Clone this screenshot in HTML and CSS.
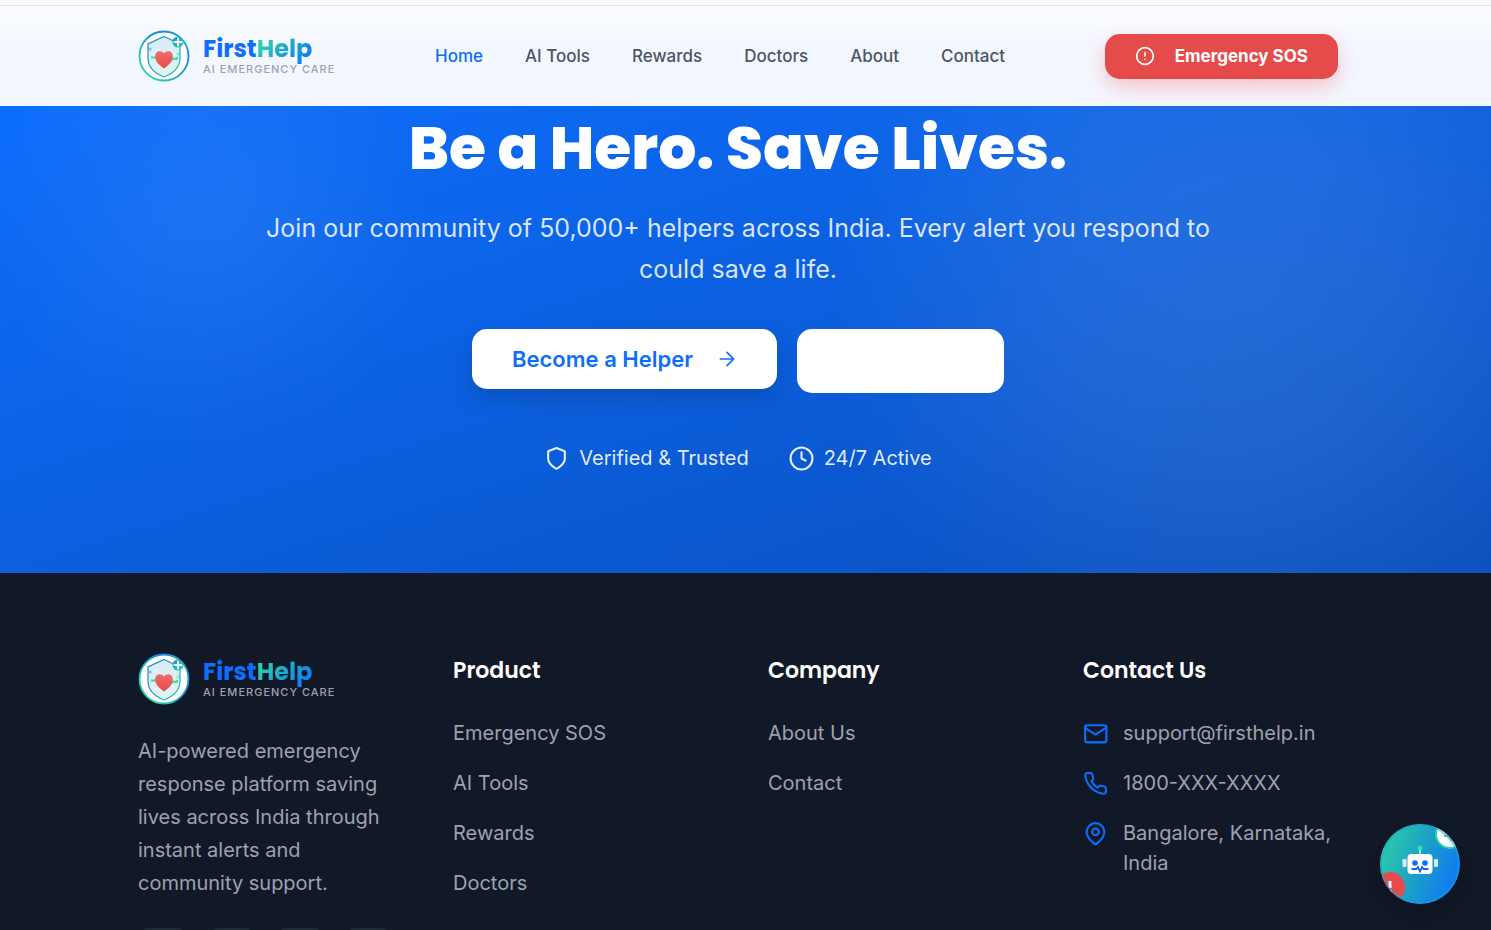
FILE: index.html
```html
<!DOCTYPE html>
<html lang="en">
<head>
    <meta charset="UTF-8">
    <meta name="viewport" content="width=device-width, initial-scale=1.0">
    <title>FirstHelp - AI Emergency Care</title>
    <link rel="stylesheet" href="styles.css">
</head>
<body>

    <!-- shared logo mark -->
    <svg class="defs" width="0" height="0" aria-hidden="true">
        <defs>
            <linearGradient id="ring" x1="0" y1="1" x2="1" y2="0">
                <stop offset="0" stop-color="#2ee59d"/>
                <stop offset="0.5" stop-color="#1a9fc9"/>
                <stop offset="0.75" stop-color="#1a86dd"/>
                <stop offset="1" stop-color="#2ecfa5"/>
            </linearGradient>
            <linearGradient id="badge" x1="0" y1="0" x2="1" y2="1">
                <stop offset="0" stop-color="#1a90d4"/>
                <stop offset="1" stop-color="#2ed6a0"/>
            </linearGradient>
            <linearGradient id="shieldFill" x1="0" y1="0" x2="0" y2="1">
                <stop offset="0" stop-color="#dbeaf8"/>
                <stop offset="1" stop-color="#dff6f0"/>
            </linearGradient>
            <linearGradient id="shieldLine" x1="0" y1="0" x2="1" y2="1">
                <stop offset="0" stop-color="#1a7fe0"/>
                <stop offset="1" stop-color="#24c3ae"/>
            </linearGradient>
            <linearGradient id="heart" x1="0" y1="0" x2="0" y2="1">
                <stop offset="0" stop-color="#f46a6a"/>
                <stop offset="1" stop-color="#e64b4b"/>
            </linearGradient>
            <symbol id="mark" viewBox="0 0 52 52">
                <circle cx="26" cy="26" r="24.5" fill="#fff" stroke="url(#ring)" stroke-width="1.8"/>
                <path d="M26 6.500L42 14V28C42 37.500 35 43.500 26 47C17 43.500 10 37.500 10 28V14Z" fill="url(#shieldFill)" stroke="url(#shieldLine)" stroke-width="1.2"/>
                <path d="M13 27.500H18M33 30L36 28.500L38.500 29L39.500 27" fill="none" stroke="#2ee59d" stroke-width="2"/>
                <path d="M26 38.500C20 34 17.200 31 17.200 26.500C17.200 20.500 23.500 20 26 23.500C28.500 20 34.800 20.500 34.800 26.500C34.800 31 32 34 26 38.500Z" fill="url(#heart)"/>
                <circle cx="12" cy="19" r="1.600" fill="#5b9bf5" opacity="0.7"/>
                <circle cx="40" cy="24" r="1.400" fill="#2ee59d" opacity="0.5"/>
                <circle cx="40" cy="12" r="5.500" fill="url(#badge)"/>
                <path d="M40 8.500V15.500M36.500 12H43.500" stroke="#fff" stroke-width="1.800" stroke-linecap="round"/>
            </symbol>
        </defs>
    </svg>

    <header class="navbar">
        <div class="container nav-inner">
            <a class="logo" href="#">
                <svg class="logo-mark" aria-hidden="true"><use href="#mark"/></svg>
                <span class="logo-text">
                    <span class="logo-name">First<span class="logo-accent">Help</span></span>
                    <span class="logo-tag">AI EMERGENCY CARE</span>
                </span>
            </a>
            <nav class="nav-links">
                <a class="active" href="#">Home</a>
                <a href="#">AI Tools</a>
                <a href="#">Rewards</a>
                <a href="#">Doctors</a>
                <a href="#">About</a>
                <a href="#">Contact</a>
            </nav>
            <button class="btn-sos" type="button">
                <svg class="icon-sm" viewBox="0 0 24 24" aria-hidden="true"><circle cx="12" cy="12" r="10"/><path d="M12 8v4M12 16h.01"/></svg>
                Emergency SOS
            </button>
        </div>
    </header>

    <section class="cta">
        <div class="container cta-inner">
            <h2>Be a Hero. Save Lives.</h2>
            <p class="cta-text">Join our community of 50,000+ helpers across India. Every alert you respond to could save a life.</p>
            <div class="cta-buttons">
                <button class="btn-helper" type="button">
                    Become a Helper
                    <svg class="icon-sm" viewBox="0 0 24 24" aria-hidden="true"><path d="M4 12h16M12 4l8 8-8 8"/></svg>
                </button>
                <button class="btn-blank" type="button" aria-label="Learn more"></button>
            </div>
            <div class="cta-trust">
                <span><svg class="icon" viewBox="0 0 24 24" aria-hidden="true"><path d="M12 22s8-4 8-10V5l-8-3-8 3v7c0 6 8 10 8 10z"/></svg>Verified &amp; Trusted</span>
                <span><svg class="icon" viewBox="0 0 24 24" aria-hidden="true"><circle cx="12" cy="12" r="10.500"/><path d="M12 6v6l4 2"/></svg>24/7 Active</span>
            </div>
        </div>
    </section>

    <footer class="footer">
        <div class="container footer-grid">
            <div class="footer-brand">
                <a class="logo" href="#">
                    <svg class="logo-mark" aria-hidden="true"><use href="#mark"/></svg>
                    <span class="logo-text">
                        <span class="logo-name">First<span class="logo-accent">Help</span></span>
                        <span class="logo-tag">AI EMERGENCY CARE</span>
                    </span>
                </a>
                <p>AI-powered emergency response platform saving lives across India through instant alerts and community support.</p>
                <div class="social">
                    <a href="#" aria-label="Facebook"></a>
                    <a href="#" aria-label="Twitter"></a>
                    <a href="#" aria-label="Instagram"></a>
                    <a href="#" aria-label="LinkedIn"></a>
                </div>
            </div>
            <div>
                <h3>Product</h3>
                <ul>
                    <li><a href="#">Emergency SOS</a></li>
                    <li><a href="#">AI Tools</a></li>
                    <li><a href="#">Rewards</a></li>
                    <li><a href="#">Doctors</a></li>
                </ul>
            </div>
            <div>
                <h3>Company</h3>
                <ul>
                    <li><a href="#">About Us</a></li>
                    <li><a href="#">Contact</a></li>
                </ul>
            </div>
            <div>
                <h3>Contact Us</h3>
                <ul class="contact">
                    <li><svg class="icon" viewBox="0 0 24 24" aria-hidden="true"><rect x="2" y="4" width="20.500" height="16.500" rx="2"/><path d="M2 6.500l10 6.500 10-6.500"/></svg>support@firsthelp.in</li>
                    <li><svg class="icon" viewBox="0 0 24 24" aria-hidden="true"><path d="M22 16.920v3a2 2 0 0 1-2.180 2 19.790 19.790 0 0 1-8.630-3.070 19.500 19.500 0 0 1-6-6 19.790 19.790 0 0 1-3.070-8.670A2 2 0 0 1 4.110 2h3a2 2 0 0 1 2 1.720 12.840 12.840 0 0 0 .7 2.810 2 2 0 0 1-.45 2.110L8.090 9.910a16 16 0 0 0 6 6l1.270-1.270a2 2 0 0 1 2.110-.45 12.840 12.840 0 0 0 2.810.7A2 2 0 0 1 22 16.920z"/></svg>1800-XXX-XXXX</li>
                    <li><svg class="icon" viewBox="0 0 24 24" aria-hidden="true"><path d="M20.500 10.500c0 6.500-8.500 12-8.500 12s-8.500-5.500-8.500-12a8.500 8.500 0 0 1 17 0z"/><circle cx="12" cy="10.500" r="3.200"/></svg>Bangalore, Karnataka, India</li>
                </ul>
            </div>
        </div>
    </footer>

    <button class="chat-btn" type="button" aria-label="Open assistant">
        <svg viewBox="0 0 80 80" aria-hidden="true">
            <path d="M40 24v7" stroke="#d5eef8" stroke-width="1.500"/>
            <circle cx="40" cy="24" r="2.500" fill="#2ee59d"/>
            <rect x="22.500" y="35" width="4" height="8" rx="1" fill="#d5eef8"/>
            <rect x="54" y="35" width="4" height="8" rx="1" fill="#d5eef8"/>
            <rect x="27.500" y="30" width="25" height="20" rx="4" fill="#fff"/>
            <circle cx="35" cy="39" r="2.800" fill="#0d6efd"/>
            <circle cx="45" cy="39" r="2.800" fill="#0d6efd"/>
            <path d="M31.500 45H36.500L38 43L40 47.500L42 43L43.500 45H48.500" fill="none" stroke="#1667e0" stroke-width="1.800"/>
            <circle cx="70" cy="10" r="14" fill="#fff" stroke="#2ed6a0" stroke-width="2"/>
            <path d="M64 12h5l-2-4M69 6l2 4M69 12l2 4 2-3" fill="none" stroke="#2ed6a0" stroke-width="1.800"/>
            <circle cx="10" cy="63" r="15" fill="#e64b4b"/>
            <path d="M10 57v7M10 66v2" stroke="#fff" stroke-width="3"/>
            <circle cx="40" cy="40" r="39" fill="none" stroke="#1a9fe0" stroke-width="2" opacity="0.5"/>
        </svg>
    </button>

</body>
</html>
```
FILE: styles.css
```css
* {
    box-sizing: border-box;
    margin: 0;
    padding: 0;
}

html {
    scrollbar-width: none;
}

body {
    font-family: Inter, "Liberation Sans", sans-serif;
    font-size: 20px;
    line-height: 30px;
    color: #4b5563;
    background: #111827;
}

a {
    color: inherit;
    text-decoration: none;
}

button {
    font-family: inherit;
    border: none;
    cursor: pointer;
}

svg {
    flex-shrink: 0;
}

.defs {
    position: absolute;
}

.icon,
.icon-sm {
    width: 25px;
    height: 25px;
    fill: none;
    stroke: currentColor;
    stroke-width: 2;
    stroke-linecap: round;
    stroke-linejoin: round;
}

.icon-sm {
    width: 20px;
    height: 20px;
}

.container {
    max-width: 1200px;
    margin: 0 auto;
}

.navbar,
.cta,
.footer {
    padding-right: 15px;
}

/* Navbar */
.navbar {
    height: 106px;
    padding-top: 6px;
    background: linear-gradient(#fafcff 10px, #f3f7ff 50px);
    box-shadow: inset 0 5px #f8fafc, inset 0 6px #e2e5ea;
}

.nav-inner {
    display: flex;
    align-items: center;
    justify-content: space-between;
    height: 100px;
}

.logo {
    display: flex;
    align-items: center;
    gap: 13px;
}

.logo-mark {
    width: 52px;
    height: 52px;
}

.logo-text {
    display: flex;
    flex-direction: column;
}

.logo-name {
    font-family: Poppins, Inter, sans-serif;
    font-size: 24px;
    font-weight: 700;
    line-height: 26px;
    color: #0d6efd;
}

.logo-accent {
    color: transparent;
    background: linear-gradient(135deg, #2ee59d, #0d6efd);
    background-clip: text;
    -webkit-background-clip: text;
}

.logo-tag {
    font-size: 11px;
    font-weight: 500;
    line-height: 14px;
    letter-spacing: 1px;
    color: #9ca3af;
}

.nav-links {
    display: flex;
    gap: 42px;
    font-size: 17px;
    font-weight: 500;
}

.nav-links .active {
    color: #0d6efd;
}

.btn-sos {
    display: flex;
    align-items: center;
    gap: 20px;
    height: 45px;
    padding: 0 30px;
    border-radius: 15px;
    font-size: 17px;
    font-weight: 700;
    color: #fff;
    background: #e64b4b;
    box-shadow: 0 8px 20px rgba(255, 77, 77, 0.3);
}

/* Call to action */
.cta {
    background:
        radial-gradient(ellipse 400px 420px at 1230px 190px, rgba(255, 255, 255, 0.1), rgba(255, 255, 255, 0.08) 40%, transparent),
        radial-gradient(ellipse 220px 240px at 210px 110px, rgba(255, 255, 255, 0.07), transparent),
        linear-gradient(to bottom right, #0d6efd, #0a4fbd);
}

.cta-inner {
    display: flex;
    flex-direction: column;
    align-items: center;
    padding-bottom: 100px;
    text-align: center;
    color: #fff;
}

.cta h2 {
    font-family: Poppins, Inter, sans-serif;
    font-size: 60px;
    font-weight: 800;
    line-height: 72px;
    padding-top: 6px;
}

.cta-text {
    max-width: 1000px;
    margin-top: 24px;
    font-size: 25px;
    line-height: 41px;
    color: rgba(255, 255, 255, 0.85);
}

.cta-buttons {
    display: flex;
    align-items: flex-start;
    gap: 20px;
    margin-top: 39px;
}

.btn-helper {
    display: flex;
    align-items: center;
    gap: 24px;
    height: 60px;
    padding: 0 40px;
    border-radius: 15px;
    font-size: 22px;
    font-weight: 600;
    color: #0d6efd;
    background: #fff;
    box-shadow: 0 10px 20px rgba(0, 0, 0, 0.14);
}

.btn-blank {
    width: 207px;
    height: 64px;
    border-radius: 15px;
    background: #fff;
}

.cta-trust {
    display: flex;
    gap: 40px;
    margin-top: 50px;
    color: rgba(255, 255, 255, 0.9);
}

.cta-trust span {
    display: flex;
    align-items: center;
    gap: 10px;
}

/* Footer */
.footer {
    padding-top: 80px;
    color: #9ca3af;
    background: #111827;
}

.footer-grid {
    display: grid;
    grid-template-columns: repeat(4, minmax(0, 1fr));
    gap: 60px;
}

.footer-brand p {
    margin-top: 30px;
    line-height: 33px;
}

.social {
    display: flex;
    gap: 19px;
    margin-top: 28px;
}

.social a {
    width: 50px;
    height: 50px;
    border-radius: 12px;
    background: #1f2937;
}

.footer h3 {
    margin-bottom: 30px;
    font-family: Poppins, Inter, sans-serif;
    font-size: 22px;
    font-weight: 600;
    line-height: 35px;
    color: #fff;
}

.footer ul {
    display: flex;
    flex-direction: column;
    gap: 20px;
    list-style: none;
}

.contact li {
    display: flex;
    gap: 15px;
}

.contact .icon {
    margin-top: 3px;
    color: #0d6efd;
}

/* Floating assistant button */
.chat-btn {
    position: fixed;
    right: 31px;
    bottom: 26px;
    width: 80px;
    height: 80px;
    border-radius: 50%;
    overflow: hidden;
    background: linear-gradient(110deg, #2ed6a0, #1a9fc9 50%, #0d6efd);
    box-shadow: 0 10px 30px rgba(0, 0, 0, 0.2);
}

.chat-btn svg {
    display: block;
}
```
